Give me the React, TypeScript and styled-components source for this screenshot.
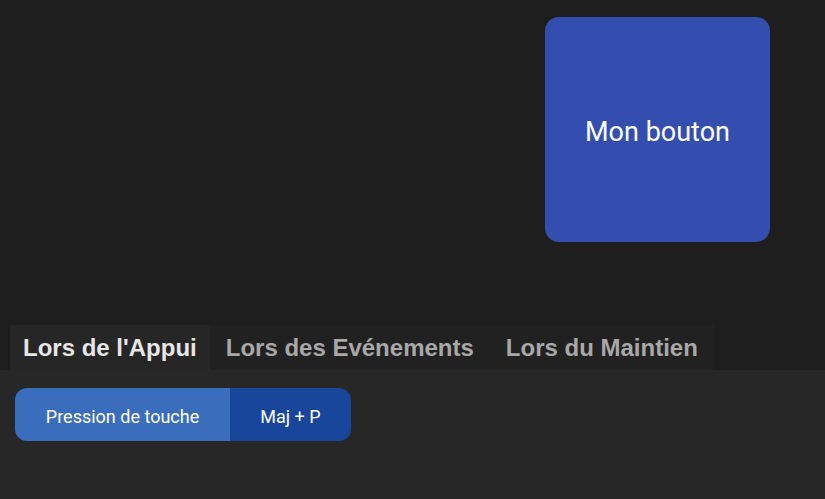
import styled, { createGlobalStyle } from 'styled-components';

const GlobalStyle = createGlobalStyle`
  html, body {
    margin: 0;
    padding: 0;
    background: #1e1e1e;
  }
  #root {
    width: 825px;
    height: 499px;
  }
`;

const Page = styled.div`
  display: flex;
  flex-direction: column;
  width: 825px;
  height: 499px;
  background: #1e1e1e;
  overflow: hidden;
`;

// zone du haut avec le gros bouton
const Stage = styled.div`
  display: flex;
  justify-content: flex-end;
  height: 325px;
  padding: 17px 55px 0 0;
  box-sizing: border-box;
`;

const BigButton = styled.button`
  width: 225px;
  height: 225px;
  padding: 4px 0 0;
  border: none;
  border-radius: 14px;
  background: #344eb0;
  color: #ffffff;
  font-family: Roboto, 'Noto Sans', sans-serif;
  font-size: 27px;
  cursor: pointer;
`;

const TabBar = styled.div`
  display: flex;
  height: 45px;
  padding-left: 10px;
`;

const Tab = styled.div<{ $active?: boolean }>`
  display: flex;
  align-items: center;
  padding: 0 ${p => (p.$active ? 13 : 16)}px;
  background: ${p => (p.$active ? '#262626' : '#212121')};
  border-radius: ${p => (p.$active ? '3px 3px 0 0' : '0')};
  color: ${p => (p.$active ? '#e6e6e6' : '#a8a8a8')};
  font-family: 'Liberation Sans', Arial, sans-serif;
  font-weight: bold;
  font-size: 24px;
  cursor: pointer;
`;

const Panel = styled.div`
  flex: 1;
  background: #272727;
  padding: 18px 15px;
`;

const Binding = styled.div`
  display: inline-flex;
  height: 53px;
  border-radius: 12px;
  overflow: hidden;
  font-family: Roboto, 'Noto Sans', sans-serif;
  font-size: 18px;
  color: #ffffff;
`;

const BindingPart = styled.div<{ $dark?: boolean }>`
  display: flex;
  align-items: center;
  justify-content: center;
  padding-top: 3px;
  box-sizing: border-box;
  width: ${p => (p.$dark ? 121 : 215)}px;
  background: ${p => (p.$dark ? '#17469a' : '#3b6dbd')};
`;

export default function App() {
  return (
    <Page>
      <GlobalStyle />
      <Stage>
        <BigButton>Mon bouton</BigButton>
      </Stage>
      <TabBar>
        <Tab $active>Lors de l'Appui</Tab>
        <Tab>Lors des Evénements</Tab>
        <Tab>Lors du Maintien</Tab>
      </TabBar>
      <Panel>
        <Binding>
          <BindingPart>Pression de touche</BindingPart>
          <BindingPart $dark>Maj + P</BindingPart>
        </Binding>
      </Panel>
    </Page>
  );
}
